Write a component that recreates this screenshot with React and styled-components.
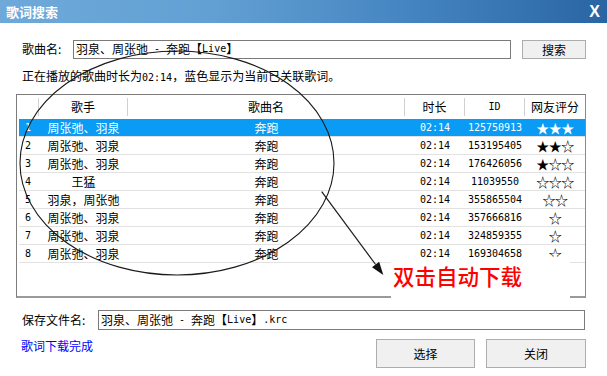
import React from "react";
import styled, { createGlobalStyle } from "styled-components";

const GlobalStyle = createGlobalStyle`
  html, body { margin: 0; padding: 0; background: #ffffff; }
  body {
    font-family: "Noto Sans CJK SC", "Noto Sans", sans-serif;
    font-size: 12px;
    color: #000;
    overflow: hidden;
  }
  * { box-sizing: border-box; }
`;

const Window = styled.div`
  position: relative;
  width: 607px;
  height: 376px;
  background: #ffffff;
  overflow: hidden;
`;

const TitleBar = styled.div`
  height: 23px;
  display: flex;
  align-items: center;
  justify-content: space-between;
  padding: 0 7px 0 6px;
  background: linear-gradient(to right, #6ea9da 0%, #62a0d3 35%, #4282bf 70%, #2a65a3 100%);
  color: #fff;
`;

const Title = styled.span`
  font-size: 13px;
  font-weight: 700;
  line-height: 23px;
`;

const Close = styled.span`
  font-family: "Liberation Sans", Arial, sans-serif;
  font-size: 16px;
  font-weight: 700;
  line-height: 23px;
`;

const Body = styled.div`
  display: flex;
  flex-direction: column;
  padding: 0 0 0 16px;
`;

const FieldRow = styled.div`
  display: flex;
  align-items: center;
  height: 20px;
  margin-top: ${(p) => p.$top}px;
  padding-left: 6px;
`;

const Label = styled.span`
  width: ${(p) => p.$w}px;
  flex: none;
  line-height: 16px;
  white-space: nowrap;
`;

const Input = styled.div`
  width: ${(p) => p.$w}px;
  height: ${(p) => p.$h || 20}px;
  flex: none;
  border: 1px solid #7a7a7a;
  background: #fff;
  padding-left: 2px;
  display: flex;
  align-items: center;
  white-space: pre;
  line-height: 16px;
`;

const Button = styled.div`
  width: ${(p) => p.$w}px;
  height: ${(p) => p.$h}px;
  margin-left: ${(p) => p.$ml || 0}px;
  flex: none;
  border: 1px solid #adadad;
  background: #f0f0f0;
  display: flex;
  align-items: center;
  justify-content: center;
  font-size: 12px;
`;

const Mono = styled.span`
  font-family: "DejaVu Sans Mono", "Liberation Mono", monospace;
  font-size: 10px;
`;

const Status = styled.div`
  margin-top: 9px;
  padding-left: 6px;
  height: 16px;
  line-height: 16px;
  white-space: nowrap;
`;

const Table = styled.div`
  margin-top: 10px;
  width: 570px;
  height: 204px;
  border: 1px solid #7c7c7c;
  border-bottom: 2px solid #9a9a9a;
  border-right-color: #8a8a8a;
  display: flex;
  flex-direction: column;
`;

const HeaderRow = styled.div`
  display: grid;
  grid-template-columns: 22px 89px 277px 60px 60px 1fr;
  height: 21px;
  align-items: end;
`;

const HeaderCell = styled.div`
  height: 18px;
  display: flex;
  align-items: center;
  justify-content: center;
  border-right: ${(p) => (p.$last ? "none" : "1px solid #d0d0d0")};
  line-height: 16px;
  padding-bottom: 1px;
`;

const Rows = styled.div`
  margin-top: 3px;
  padding-left: 2px;
  display: flex;
  flex-direction: column;
`;

const Row = styled.div`
  display: grid;
  grid-template-columns: 20px 89px 277px 60px 60px 1fr;
  height: 18px;
  border-bottom: 1px solid #e2e2e2;
  align-items: center;
  background: ${(p) => (p.$sel ? "#0a9cf5" : "transparent")};
  color: ${(p) => (p.$sel ? "#ffffff" : "#000000")};
`;

const Cell = styled.div`
  text-align: ${(p) => (p.$left ? "left" : "center")};
  padding-left: ${(p) => (p.$left ? 6 : 0)}px;
  line-height: 16px;
  white-space: nowrap;
`;

const NumCell = styled(Cell)`
  font-family: "DejaVu Sans Mono", "Liberation Mono", monospace;
  font-size: 10px;
`;

const Stars = styled(Cell)`
  font-size: 13px;
  letter-spacing: -0.5px;
`;

const BottomRow = styled.div`
  display: flex;
  align-items: flex-start;
  margin-top: 9px;
  padding-left: 5px;
  height: 29px;
`;

const Link = styled.span`
  color: #0000ff;
  line-height: 14px;
`;

const ButtonGroup = styled.div`
  margin-left: auto;
  margin-right: 21px;
  display: flex;
  gap: 11px;
`;

const Callout = styled.div`
  position: absolute;
  left: 391px;
  top: 257px;
  width: 179px;
  height: 53px;
  background: #ffffff;
  padding: 6px 0 0 2px;
  color: #ff0000;
  font-size: 21.5px;
  font-weight: 500;
  line-height: 26px;
  white-space: nowrap;
`;

const Overlay = styled.svg`
  position: absolute;
  left: 0;
  top: 0;
  pointer-events: none;
`;

const data = [
  ["1", "周张弛、羽泉", "奔跑", "02:14", "125750913", "★★★", true],
  ["2", "周张弛、羽泉", "奔跑", "02:14", "153195405", "★★☆"],
  ["3", "周张弛、羽泉", "奔跑", "02:14", "176426056", "★☆☆"],
  ["4", "王猛", "奔跑", "02:14", "11039550", "☆☆☆"],
  ["5", "羽泉，周张弛", "奔跑", "02:14", "355865504", "☆☆"],
  ["6", "周张弛、羽泉", "奔跑", "02:14", "357666816", "☆"],
  ["7", "周张弛、羽泉", "奔跑", "02:14", "324859355", "☆"],
  ["8", "周张弛、羽泉", "奔跑", "02:14", "169304658", "☆"],
];

export default function App() {
  return (
    <Window>
      <GlobalStyle />
      <TitleBar>
        <Title>歌词搜索</Title>
        <Close>X</Close>
      </TitleBar>
      <Body>
        <FieldRow $top={16}>
          <Label $w={51}>歌曲名:</Label>
          <Input $w={438} $h={19}>
            羽泉、周张弛<Mono> - </Mono>奔跑【<Mono>Live</Mono>】
          </Input>
          <Button $w={64} $h={19} $ml={11}>搜索</Button>
        </FieldRow>
        <Status>
          正在播放的歌曲时长为<Mono>02:14</Mono>，蓝色显示为当前已关联歌词。
        </Status>
        <Table>
          <HeaderRow>
            <HeaderCell />
            <HeaderCell>歌手</HeaderCell>
            <HeaderCell>歌曲名</HeaderCell>
            <HeaderCell>时长</HeaderCell>
            <HeaderCell><Mono>ID</Mono></HeaderCell>
            <HeaderCell $last>网友评分</HeaderCell>
          </HeaderRow>
          <Rows>
            {data.map((r) => (
              <Row key={r[0]} $sel={r[6]}>
                <NumCell $left>{r[0]}</NumCell>
                <Cell>{r[1]}</Cell>
                <Cell>{r[2]}</Cell>
                <NumCell>{r[3]}</NumCell>
                <NumCell>{r[4]}</NumCell>
                <Stars>{r[5]}</Stars>
              </Row>
            ))}
          </Rows>
        </Table>
        <FieldRow $top={12}>
          <Label $w={76}>保存文件名:</Label>
          <Input $w={487} $h={20}>
            羽泉、周张弛<Mono> - </Mono>奔跑【<Mono>Live</Mono>】<Mono>.krc</Mono>
          </Input>
        </FieldRow>
        <BottomRow>
          <Link>歌词下载完成</Link>
          <ButtonGroup>
            <Button $w={99} $h={29}>选择</Button>
            <Button $w={100} $h={29}>关闭</Button>
          </ButtonGroup>
        </BottomRow>
      </Body>
      <Callout>双击自动下载</Callout>
      <Overlay width="607" height="376" viewBox="0 0 607 376">
        <ellipse cx="177" cy="163" rx="157" ry="112" fill="none" stroke="#1a1a1a" strokeWidth="1.1" />
        <line x1="321.7" y1="191.7" x2="375.6" y2="264.5" stroke="#1a1a1a" strokeWidth="1.2" />
        <polygon points="383.3,275 372,267.2 379.2,261.8" fill="#111" />
      </Overlay>
    </Window>
  );
}
